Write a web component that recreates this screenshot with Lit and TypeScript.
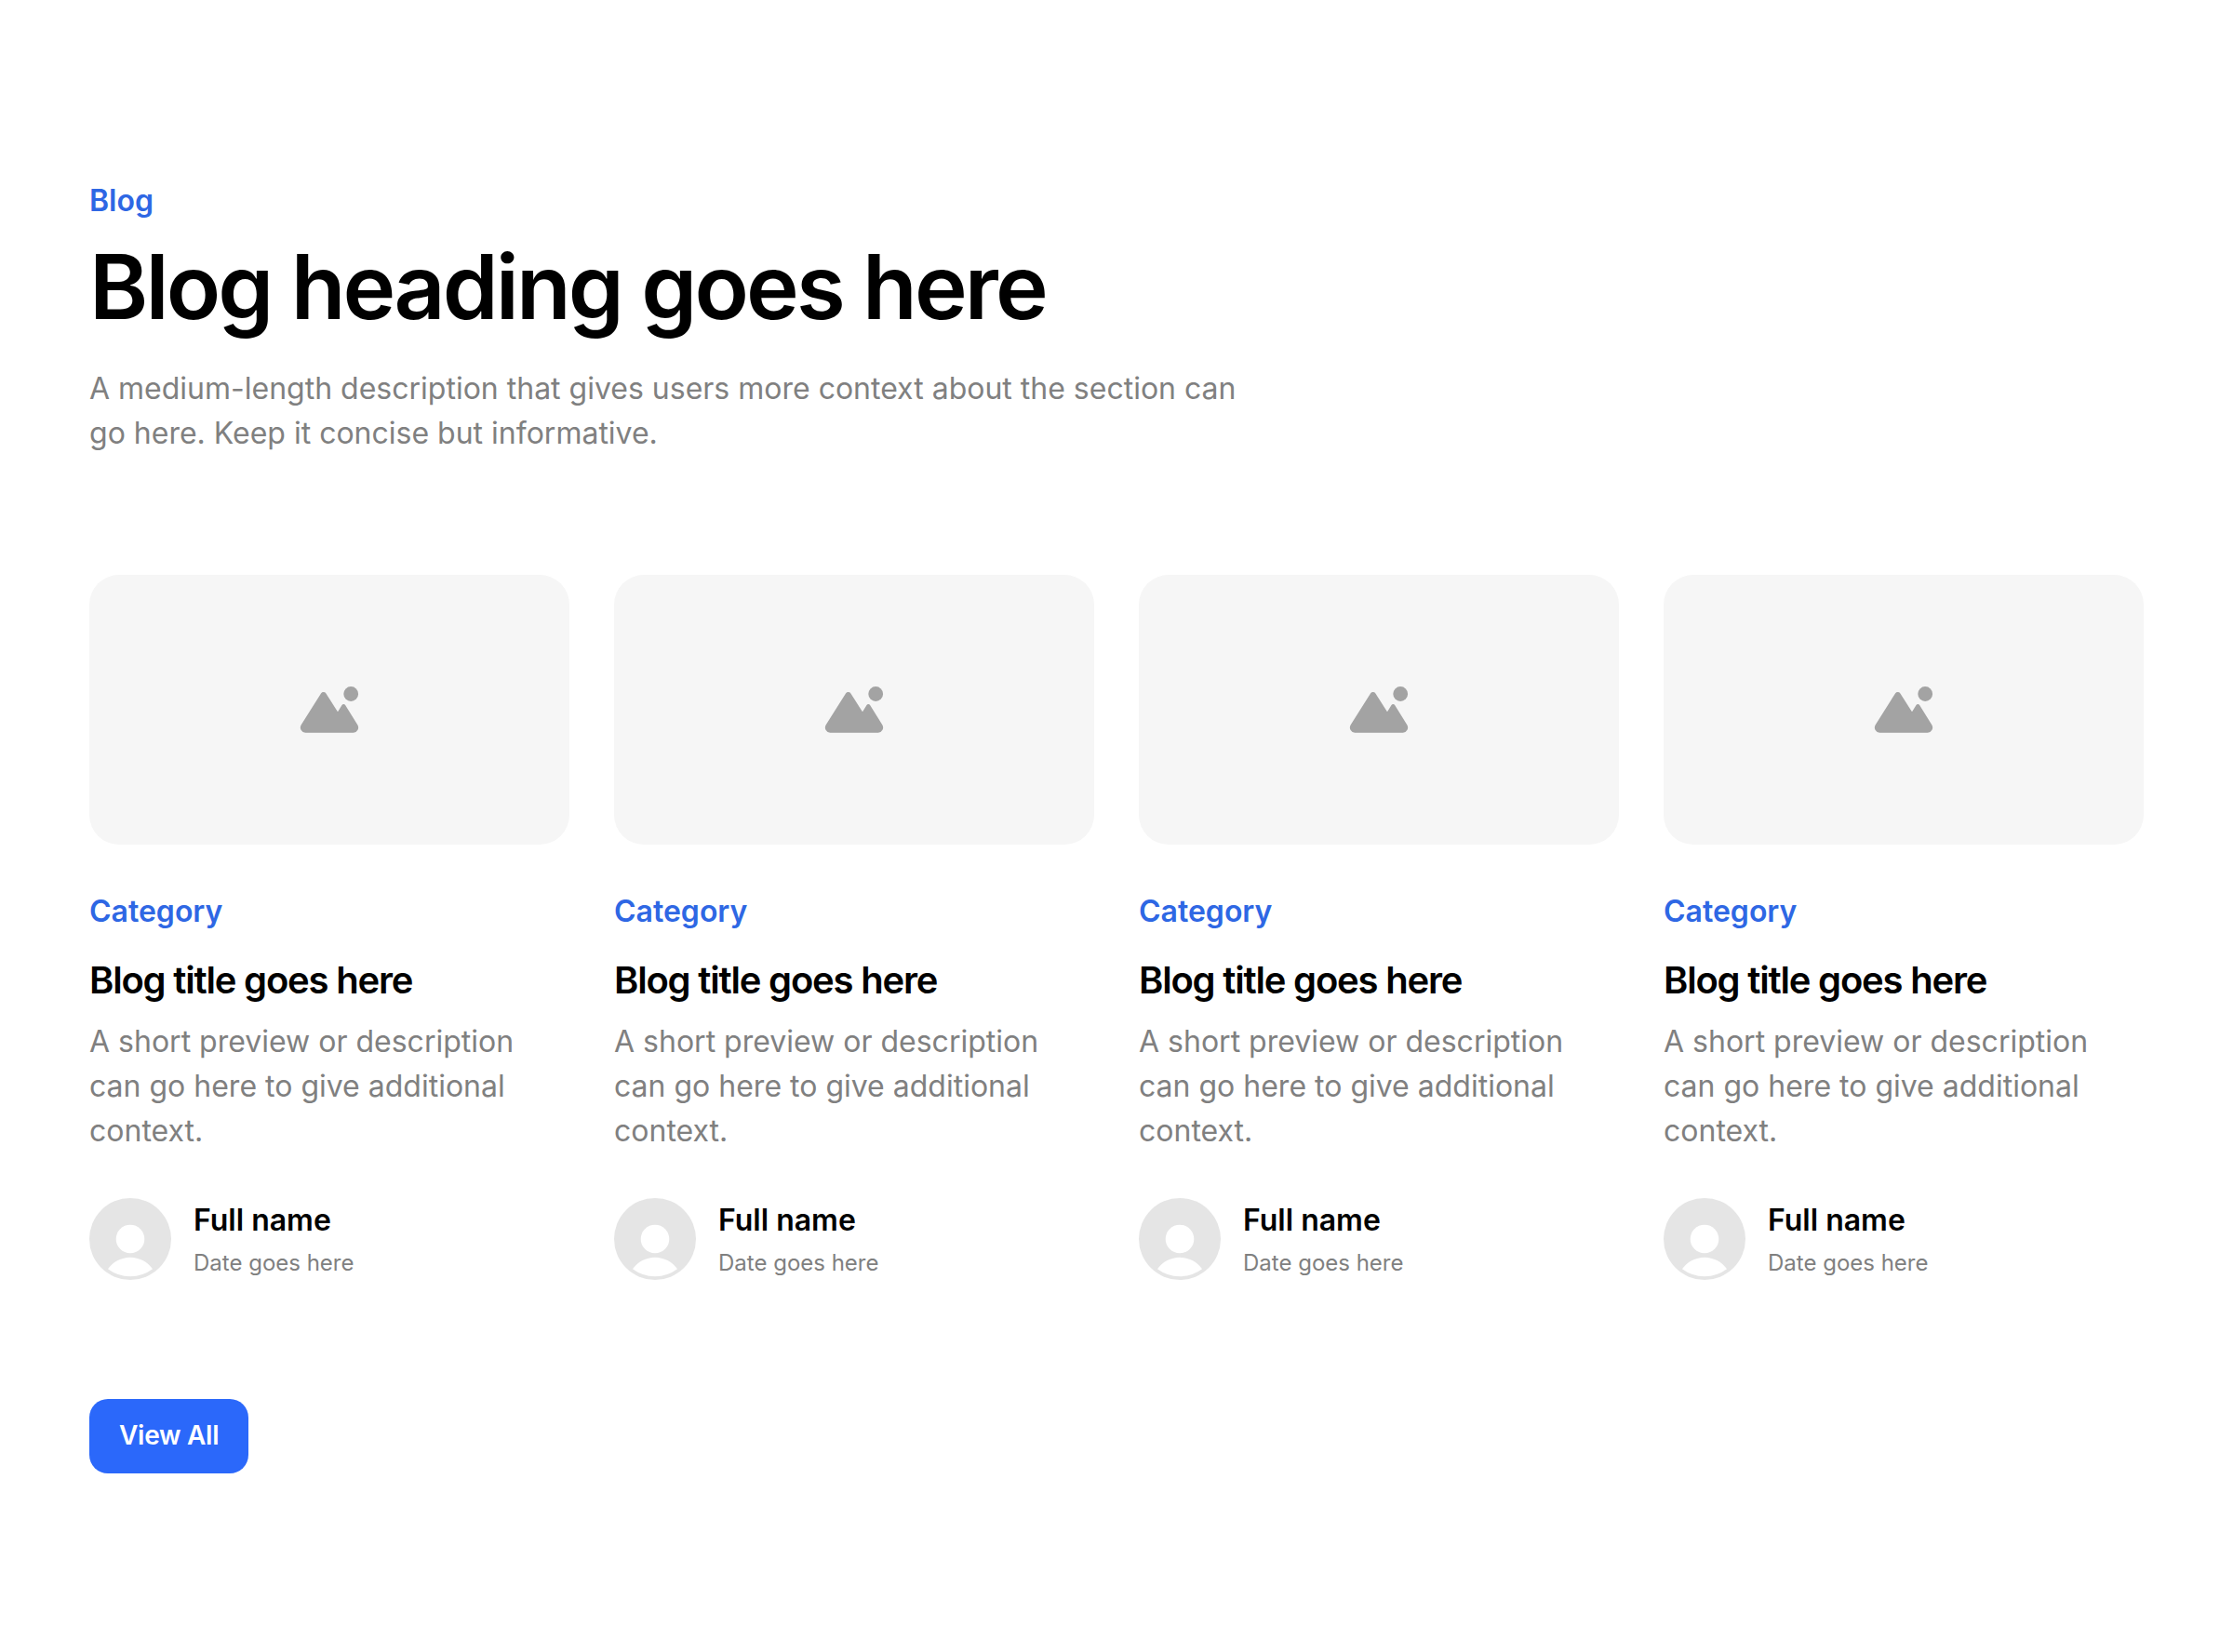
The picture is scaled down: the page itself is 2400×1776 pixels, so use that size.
import { LitElement, css, html } from 'lit';
import { customElement, property } from 'lit/decorators.js';

export interface BlogPost {
  category: string;
  title: string;
  preview: string;
  author: string;
  date: string;
}

const posts: BlogPost[] = Array.from({ length: 4 }, () => ({
  category: 'Category',
  title: 'Blog title goes here',
  preview: 'A short preview or description can go here to give additional context.',
  author: 'Full name',
  date: 'Date goes here',
}));

/**
 * A single blog preview with a placeholder image and its author.
 * @element blog-card
 */
@customElement('blog-card')
export class BlogCardComponent extends LitElement {
  @property({ type: Object }) post!: BlogPost;

  static override styles = css`
    :host {
      display: flex;
      flex-direction: column;
      gap: 48px;
      min-width: 0;
    }

    .image {
      display: flex;
      align-items: center;
      justify-content: center;
      aspect-ratio: 16 / 9;
      border-radius: 32px;
      background: #f6f6f6;
    }

    .image-icon {
      width: 64px;
      height: 64px;
      fill: #a3a3a3;
    }

    .category {
      color: #2e67e4;
      font-weight: 600;
      margin-bottom: 24px;
    }

    .title {
      margin: 0 0 16px;
      color: #000;
      font-size: 40px;
      font-weight: 600;
      line-height: 1.3;
      letter-spacing: -0.03em;
    }

    .preview {
      margin: 0;
      color: #808080;
    }

    .author {
      display: flex;
      align-items: center;
      gap: 24px;
    }

    .avatar {
      width: 88px;
      height: 88px;
      flex: none;
    }

    .author-text {
      display: flex;
      flex-direction: column;
      gap: 4px;
    }

    .name {
      color: #000;
      font-weight: 600;
    }

    .date {
      color: #808080;
      font-size: 24px;
      line-height: 1.5;
    }
  `;

  override render() {
    const { post } = this;
    if (!post) return html``;

    return html`
      <div class="image">
        <svg class="image-icon" viewBox="0 0 64 64" aria-hidden="true">
          <circle cx="55.2" cy="15" r="7.9" />
          <path
            d="M23 14.4A3.2 3.2 0 0 1 28.4 14.4L41 34.3L45.5 27A2.1 2.1 0 0 1 49.1 27L62.3 48.3A5.5 5.5 0 0 1 57.8 56.7H6.2A5.5 5.5 0 0 1 1.7 48.3Z"
          />
        </svg>
      </div>

      <div>
        <div class="category">${post.category}</div>
        <h3 class="title">${post.title}</h3>
        <p class="preview">${post.preview}</p>
      </div>

      <div class="author">
        <svg class="avatar" viewBox="0 0 88 88" aria-hidden="true">
          <circle cx="44" cy="44" r="44" fill="#e5e5e5" />
          <circle cx="44" cy="44" r="15.3" fill="#fff" />
          <path d="M20 76.2A29.5 29.5 0 0 1 68 76.2A40.2 40.2 0 0 1 20 76.2Z" fill="#fff" />
        </svg>
        <div class="author-text">
          <span class="name">${post.author}</span>
          <span class="date">${post.date}</span>
        </div>
      </div>
    `;
  }
}

@customElement('app-root')
export class AppRoot extends LitElement {
  static override styles = css`
    :host {
      display: block;
      box-sizing: border-box;
      min-height: 100vh;
      padding: 192px 96px;
      background: #fff;
      font-family: Inter, 'Liberation Sans', sans-serif;
      font-size: 32px;
      line-height: 1.5;
    }

    .section {
      display: flex;
      flex-direction: column;
      align-items: flex-start;
      gap: 128px;
    }

    .tagline {
      color: #2e67e4;
      font-weight: 600;
      margin-bottom: 16px;
    }

    .heading {
      margin: 0 0 32px;
      color: #000;
      font-size: 96px;
      font-weight: 600;
      line-height: 1.1;
      letter-spacing: -0.03em;
    }

    .description {
      max-width: 1280px;
      margin: 0;
      color: #808080;
    }

    .cards {
      display: grid;
      grid-template-columns: repeat(4, minmax(0, 1fr));
      gap: 48px;
      width: 100%;
    }

    .view-all {
      height: 80px;
      padding: 0 32px 2px;
      border: none;
      border-radius: 20px;
      background: #2b68fa;
      color: #fff;
      font-family: inherit;
      font-size: 28px;
      font-weight: 600;
      line-height: 1.5;
      letter-spacing: -0.01em;
    }
  `;

  override render() {
    return html`
      <section class="section">
        <header>
          <div class="tagline">Blog</div>
          <h2 class="heading">Blog heading goes here</h2>
          <p class="description">
            A medium-length description that gives users more context about the section can go here. Keep it concise but
            informative.
          </p>
        </header>

        <div class="cards">${posts.map((post) => html`<blog-card .post=${post}></blog-card>`)}</div>

        <button class="view-all" type="button">View All</button>
      </section>
    `;
  }
}
